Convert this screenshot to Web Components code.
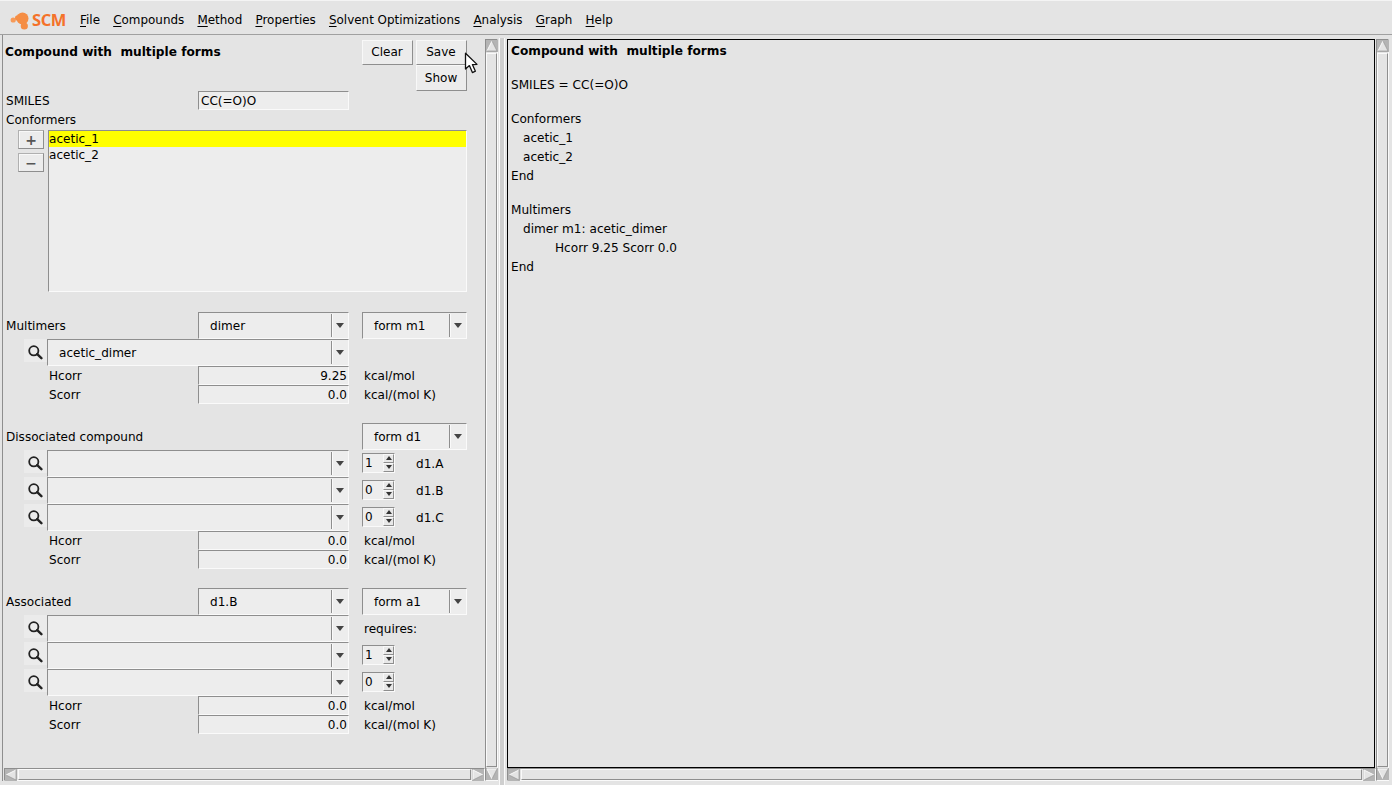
<!DOCTYPE html>
<html>
<head>
<meta charset="utf-8">
<style>
html, body { margin: 0; height: 100%; background: #e4e4e4; overflow: hidden; }
body { font-family: "DejaVu Sans", sans-serif; font-size: 12px; color: #000; }
</style>
</head>
<body>
<scm-app></scm-app>
<script>
class ScmBase extends HTMLElement {
    constructor() {
        super();
        this.attachShadow({ mode: 'open' });
    }
    connectedCallback() {
        this.shadowRoot.innerHTML = this.markup();
    }
}

class ScmMenubar extends ScmBase {
    markup() {
        const items = [['F', 'ile'], ['C', 'ompounds'], ['M', 'ethod'], ['P', 'roperties'], ['S', 'olvent Optimizations'], ['A', 'nalysis'], ['G', 'raph'], ['H', 'elp']];
        return `
        <style>
            :host { display: flex; align-items: center; height: 35px; box-sizing: border-box; border-bottom: 1px solid #a0a0a0; border-top: 1px solid #f4f4f4; padding: 4px 0 0 10px; font-size: 11.95px; }
            .logo { display: flex; align-items: center; width: 70px; flex: none; }
            .logo span { font: bold 16.5px "Open Sans", sans-serif; color: #f4722a; letter-spacing: -0.4px; line-height: 20px; margin: 1px 0 0 1px; }
            nav { display: flex; gap: 13.2px; }
            u { text-underline-offset: 2px; }
        </style>
        <div class="logo">
            <svg width="21" height="22" viewBox="0 0 21 22">
                <circle cx="12.5" cy="9.5" r="6" fill="#f58d44"/>
                <circle cx="14.3" cy="17" r="3.6" fill="#f58d44"/>
                <circle cx="3.2" cy="11" r="2.6" fill="#f79a58"/>
                <circle cx="7.8" cy="9" r="2.8" fill="#f58d44"/>
            </svg>
            <span>SCM</span>
        </div>
        <nav>${items.map(i => `<span><u>${i[0]}</u>${i[1]}</span>`).join('')}</nav>
        `;
    }
}

class ScmButton extends ScmBase {
    markup() {
        return `
        <style>
            :host { display: flex; align-items: center; justify-content: center; box-sizing: border-box; background: #ececec; border: 1px solid; border-color: #f8f8f8 #8e8e8e #8e8e8e #f8f8f8; }
        </style>
        <slot></slot>
        `;
    }
}

class ScmEntry extends ScmBase {
    markup() {
        const align = this.hasAttribute('right') ? 'flex-end' : 'flex-start';
        return `
        <style>
            :host { display: flex; align-items: center; justify-content: ${align}; box-sizing: border-box; height: 19px; padding: 0 1px 0 2px; background: #ededed; border: 1px solid; border-color: #8e8e8e #fafafa #fafafa #8e8e8e; }
        </style>
        <slot></slot>
        `;
    }
}

class ScmCombo extends ScmBase {
    markup() {
        return `
        <style>
            :host { display: flex; box-sizing: border-box; height: 27px; background: #ededed; border: 1px solid; border-color: #8e8e8e #fafafa #fafafa #8e8e8e; }
            .text { flex: 1; display: flex; align-items: center; padding-left: 11px; min-width: 0; }
            .arrow { flex: none; width: 16px; margin: 1px 0; border-left: 1px solid #8e8e8e; display: flex; align-items: center; justify-content: center; box-shadow: inset 1px 0 0 #fafafa; }
            .arrow i { width: 0; height: 0; border: 4px solid transparent; border-top: 5px solid #444; border-bottom: 0; }
        </style>
        <div class="text"><slot></slot></div>
        <div class="arrow"><i></i></div>
        `;
    }
}

class ScmSpin extends ScmBase {
    markup() {
        return `
        <style>
            :host { display: flex; flex: none; box-sizing: border-box; width: 33px; height: 20px; margin-top: -2px; background: #ededed; border: 1px solid; border-color: #8e8e8e #fafafa #fafafa #8e8e8e; }
            .text { flex: 1; display: flex; align-items: center; padding-left: 2px; }
            .btns { flex: none; width: 11px; display: flex; flex-direction: column; }
            .btns b { flex: 1; display: flex; align-items: center; justify-content: center; box-sizing: border-box; border: 1px solid; border-color: #f8f8f8 #8e8e8e #8e8e8e #f8f8f8; background: #e8e8e8; }
            .up { width: 0; height: 0; border: 3px solid transparent; border-bottom: 4px solid #333; border-top: 0; }
            .dn { width: 0; height: 0; border: 3px solid transparent; border-top: 4px solid #333; border-bottom: 0; }
        </style>
        <div class="text"><slot></slot></div>
        <div class="btns"><b><i class="up"></i></b><b><i class="dn"></i></b></div>
        `;
    }
}

class ScmSearch extends ScmBase {
    markup() {
        return `
        <style>
            :host { display: block; width: 23px; height: 27px; }
            div { display: flex; align-items: center; justify-content: center; width: 23px; height: 23px; background: #ebebeb; }
            svg { margin: 2px 1px 0 0; }
        </style>
        <div>
            <svg width="16" height="16" viewBox="0 0 16 16" fill="none" stroke="#222">
                <circle cx="6.8" cy="6.8" r="4.6" stroke-width="1.8"/>
                <path d="M10.2 10.2 L14.4 14.2" stroke-width="2.4" stroke-linecap="round"/>
            </svg>
        </div>
        `;
    }
}

class ScmScrollbar extends ScmBase {
    markup() {
        const horizontal = this.getAttribute('orient') === 'h';
        const tri = {
            up: ['6,1 11,11 1,11', 'M6 1 L1 11', 'M6 1 L11 11 L1 11'],
            down: ['1,1 11,1 6,11', 'M11 1 L1 1 L6 11', 'M6 11 L11 1'],
            left: ['1,6 11,1 11,11', 'M11 1 L1 6', 'M1 6 L11 11 L11 1'],
            right: ['1,1 11,6 1,11', 'M1 11 L1 1 L11 6', 'M11 6 L1 11']
        };
        const btn = d => `<svg width="12" height="12" viewBox="0 0 12 12"><rect width="12" height="12" fill="#b4b4b4"/><polygon points="${tri[d][0]}" fill="#e4e4e4"/><path d="${tri[d][1]}" fill="none" stroke="#fafafa"/><path d="${tri[d][2]}" fill="none" stroke="#8e8e8e" stroke-width="0.6"/></svg>`;
        const dirs = horizontal ? ['left', 'right'] : ['up', 'down'];
        return `
        <style>
            :host { display: flex; flex-direction: ${horizontal ? 'row' : 'column'}; box-sizing: border-box; background: #e4e4e4; border: 1px solid; border-color: #8e8e8e #fafafa #fafafa #8e8e8e; ${horizontal ? 'height: 13px;' : 'width: 13px;'} }
            svg { display: block; flex: none; }
            .thumb { flex: 1; margin: ${horizontal ? '0 1px' : '1px 0'}; box-sizing: border-box; border: 1px solid; border-color: #fafafa #8e8e8e #8e8e8e #fafafa; background: #e4e4e4; }
        </style>
        ${btn(dirs[0])}<div class="thumb"></div>${btn(dirs[1])}
        `;
    }
}

class CompoundForm extends ScmBase {
    markup() {
        const lookup = (value, extra) => `
            <div class="look"><span></span><scm-search></scm-search><scm-combo>${value}</scm-combo><span></span>${extra || ''}</div>`;
        const corr = (name, value, unit) => `
            <div class="corr"><span class="sub">${name}</span><scm-entry right>${value}</scm-entry><span></span><span>${unit}</span></div>`;
        const spin = (value, label) => `<div class="spinwrap"><scm-spin>${value}</scm-spin>${label ? `<span>${label}</span>` : ''}</div>`;
        return `
        <style>
            :host { display: block; box-sizing: border-box; height: 100%; padding: 5px 0 0 2px; font-size: 12.05px; }
            .row { display: grid; grid-template-columns: 193px 151px 13px 105px; align-items: center; }
            .look { display: grid; grid-template-columns: 19px 23px 302px 13px 105px; height: 27px; align-items: center; }
            .corr { display: grid; grid-template-columns: 193px 151px 15px auto; height: 19px; align-items: center; }
            .corr .sub { padding-left: 44px; }
            .title { font-weight: bold; font-size: 12.15px; padding-bottom: 2px; }
            .head { display: grid; grid-template-columns: 357px 51px 3px 51px; height: 25px; align-items: center; }
            .head scm-button { height: 25px; padding: 0 1px 2px 0; }
            .show { display: flex; justify-content: flex-end; width: 462px; height: 26px; }
            .show scm-button { width: 51px; height: 26px; padding-right: 1px; }
            .pick { height: 27px; }
            .plain { height: 19px; }
            .indent { padding-left: 1px; }
            .confs { display: grid; grid-template-columns: 13px 26px 4px 419px; height: 162px; margin-bottom: 20px; }
            .pm { grid-column: 2; display: flex; flex-direction: column; gap: 4px; }
            .pm scm-button { height: 19px; font-weight: bold; color: #555; font-size: 14px; border-color: #b0b0b0 #8e8e8e #8e8e8e #b0b0b0; box-shadow: inset 1px 1px 0 #f8f8f8; }
            .list { grid-column: 4; box-sizing: border-box; background: #ededed; border: 1px solid; border-color: #8e8e8e #fafafa #fafafa #8e8e8e; line-height: 16px; }
            .sel { background: #ffff00; height: 16px; }
            .spinwrap { display: flex; align-items: center; gap: 21px; }
            .gap { height: 19px; }
            .req { padding-left: 2px; }
        </style>
        <div class="head">
            <span class="title">Compound with&nbsp; multiple forms</span>
            <scm-button>Clear</scm-button><span></span><scm-button>Save</scm-button>
        </div>
        <div class="show"><scm-button>Show</scm-button></div>
        <div class="row plain"><span class="indent">SMILES</span><scm-entry>CC(=O)O</scm-entry></div>
        <div class="plain indent" style="line-height:21px;height:20px">Conformers</div>
        <div class="confs">
            <div class="pm"><scm-button>+</scm-button><scm-button>&minus;</scm-button></div>
            <div class="list"><div class="sel">acetic_1</div><div>acetic_2</div></div>
        </div>

        <div class="row pick"><span class="indent">Multimers</span><scm-combo>dimer</scm-combo><span></span><scm-combo>form m1</scm-combo></div>
        ${lookup('acetic_dimer')}
        ${corr('Hcorr', '9.25', 'kcal/mol')}
        ${corr('Scorr', '0.0', 'kcal/(mol K)')}
        <div class="gap"></div>

        <div class="row pick"><span class="indent">Dissociated compound</span><span></span><span></span><scm-combo>form d1</scm-combo></div>
        ${lookup('', spin('1', 'd1.A'))}
        ${lookup('', spin('0', 'd1.B'))}
        ${lookup('', spin('0', 'd1.C'))}
        ${corr('Hcorr', '0.0', 'kcal/mol')}
        ${corr('Scorr', '0.0', 'kcal/(mol K)')}
        <div class="gap"></div>

        <div class="row pick"><span class="indent">Associated</span><scm-combo>d1.B</scm-combo><span></span><scm-combo>form a1</scm-combo></div>
        ${lookup('', '<span class="req">requires:</span>')}
        ${lookup('', spin('1'))}
        ${lookup('', spin('0'))}
        ${corr('Hcorr', '0.0', 'kcal/mol')}
        ${corr('Scorr', '0.0', 'kcal/(mol K)')}
        `;
    }
}

class ReportView extends ScmBase {
    markup() {
        const lines = [
            ['b', 'Compound with&nbsp; multiple forms'], 0,
            ['', 'SMILES = CC(=O)O'], 0,
            ['', 'Conformers'], ['i1', 'acetic_1'], ['i1', 'acetic_2'], ['', 'End'], 0,
            ['', 'Multimers'], ['i1', 'dimer m1: acetic_dimer'], ['i2', 'Hcorr 9.25 Scorr 0.0'], ['', 'End']
        ];
        return `
        <style>
            :host { display: block; box-sizing: border-box; height: 100%; border: 1px solid #000; padding: 2px 0 0 3px; background: #e4e4e4; font-size: 12.1px; }
            .l { height: 19px; line-height: 19px; white-space: pre; }
            .g { height: 15px; }
            .b { font-weight: bold; font-size: 12.15px; }
            .i1 { padding-left: 12px; }
            .i2 { padding-left: 44px; }
        </style>
        ${lines.map(l => l ? `<div class="l ${l[0]}">${l[1]}</div>` : '<div class="g"></div>').join('')}
        `;
    }
}

class ScmApp extends ScmBase {
    markup() {
        return `
        <style>
            :host { display: block; width: 1392px; height: 785px; overflow: hidden; position: relative; background: #e4e4e4; }
            .main { display: grid; grid-template-columns: 2px 483px 13px 9px 868px 1px 13px 3px; grid-template-rows: 733px 13px 4px; height: 750px; }
            .pane { grid-column: 2; grid-row: 1 / 3; border-left: 1px solid #8e8e8e; box-sizing: border-box; }
            .vs1 { grid-column: 3; grid-row: 1 / 3; margin-top: 4px; }
            .sash { grid-column: 4; grid-row: 1 / 4; margin: 3px 0 0; background: linear-gradient(90deg, #e4e4e4 0 1px, #fafafa 1px 2px, #cfcfcf 2px 6px, #fafafa 6px 7px, #e4e4e4 7px); }
            .hs1 { grid-column: 2; grid-row: 2; margin-left: 2px; }
            .report { grid-column: 5; grid-row: 1; padding-top: 4px; box-sizing: border-box; height: 733px; }
            .vs2 { grid-column: 7; grid-row: 1 / 3; margin-top: 4px; }
            .hs2 { grid-column: 5 / 7; grid-row: 2; }
            .cursor { position: absolute; left: 464px; top: 52px; }
        </style>
        <scm-menubar></scm-menubar>
        <div class="main">
            <div class="pane"><compound-form></compound-form></div>
            <scm-scrollbar class="vs1"></scm-scrollbar>
            <div class="sash"></div>
            <div class="report"><report-view></report-view></div>
            <scm-scrollbar class="vs2"></scm-scrollbar>
            <scm-scrollbar class="hs1" orient="h"></scm-scrollbar>
            <scm-scrollbar class="hs2" orient="h"></scm-scrollbar>
        </div>
        <svg class="cursor" width="15" height="23" viewBox="0 0 15 23">
            <path d="M1.5 1.2 L1.5 17 L5.4 13.6 L8.4 20.6 L11.4 19.2 L8.4 12.6 L13 12.4 Z" fill="#fff" stroke="#111" stroke-width="1.3" stroke-linejoin="round"/>
        </svg>
        `;
    }
}

customElements.define('scm-menubar', ScmMenubar);
customElements.define('scm-button', ScmButton);
customElements.define('scm-entry', ScmEntry);
customElements.define('scm-combo', ScmCombo);
customElements.define('scm-spin', ScmSpin);
customElements.define('scm-search', ScmSearch);
customElements.define('scm-scrollbar', ScmScrollbar);
customElements.define('compound-form', CompoundForm);
customElements.define('report-view', ReportView);
customElements.define('scm-app', ScmApp);
</script>
</body>
</html>
